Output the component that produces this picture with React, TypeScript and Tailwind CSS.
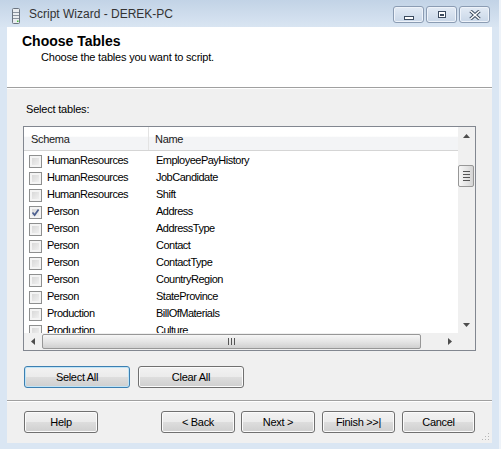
import clsx from 'clsx';

const rows: { schema: string; name: string; checked?: boolean }[] = [
  { schema: 'HumanResources', name: 'EmployeePayHistory' },
  { schema: 'HumanResources', name: 'JobCandidate' },
  { schema: 'HumanResources', name: 'Shift' },
  { schema: 'Person', name: 'Address', checked: true },
  { schema: 'Person', name: 'AddressType' },
  { schema: 'Person', name: 'Contact' },
  { schema: 'Person', name: 'ContactType' },
  { schema: 'Person', name: 'CountryRegion' },
  { schema: 'Person', name: 'StateProvince' },
  { schema: 'Production', name: 'BillOfMaterials' },
  { schema: 'Production', name: 'Culture' },
];

const CheckBox = ({ checked }: { checked?: boolean }) => (
  <div className="relative mt-[4px] h-[13px] w-[13px] shrink-0 border border-[#8e8f8f] bg-[linear-gradient(135deg,#d2d2d2,#f6f6f6)] shadow-[inset_0_0_0_2px_#f4f4f4]">
    {checked && (
      <svg className="absolute left-0 top-0" width="11" height="11" viewBox="0 0 11 11">
        <path d="M2.5 5.5 L4.6 8 L8.6 2.4" fill="none" stroke="#4c5f8f" strokeWidth="1.7" />
      </svg>
    )}
  </div>
);

const Button = ({
  label,
  className,
  focused,
}: {
  label: string;
  className?: string;
  focused?: boolean;
}) => (
  <div
    className={clsx(
      'flex h-[22px] shrink-0 items-center justify-center rounded-[3px] border text-[11px] tracking-[-0.3px] text-black',
      'bg-[linear-gradient(#f2f2f2_0%,#ebebeb_48%,#dddddd_52%,#cfcfcf_100%)]',
      focused
        ? 'border-[#3c7fb1] shadow-[inset_0_0_0_1px_#bfe4f7]'
        : 'border-[#707070] shadow-[inset_0_0_0_1px_#fbfbfb]',
      className
    )}
  >
    {label}
  </div>
);

const TitleButton = ({ kind }: { kind: 'min' | 'max' | 'close' }) => (
  <div className="flex h-[17px] w-[31px] items-center justify-center rounded-[3px] border border-[#8b9cb3] bg-[linear-gradient(#e3ebf5,#c9d7e8)] shadow-[inset_0_0_0_1px_#eef3fa]">
    <svg width="14" height="10" viewBox="0 0 14 10">
      {kind === 'min' && (
        <rect x="2.5" y="6.5" width="9" height="3" fill="#fff" stroke="#3b4a5e" />
      )}
      {kind === 'max' && (
        <>
          <rect x="3.5" y="1.5" width="7" height="6" fill="#fff" stroke="#3b4a5e" />
          <rect x="5" y="4" width="4" height="2" fill="#3b4a5e" />
        </>
      )}
      {kind === 'close' && (
        <>
          <path d="M2.5 1 L11.5 9 M11.5 1 L2.5 9" stroke="#3b4a5e" strokeWidth="3.4" />
          <path d="M2.5 1 L11.5 9 M11.5 1 L2.5 9" stroke="#fff" strokeWidth="1.6" />
        </>
      )}
    </svg>
  </div>
);

const Arrow = ({ dir }: { dir: 'up' | 'down' | 'left' | 'right' }) => {
  const d = {
    up: 'M0 4 L3.5 0 L7 4 Z',
    down: 'M0 0 L7 0 L3.5 4 Z',
    left: 'M4 0 L4 7 L0 3.5 Z',
    right: 'M0 0 L4 3.5 L0 7 Z',
  }[dir];
  const vertical = dir === 'up' || dir === 'down';
  return (
    <svg width={vertical ? 7 : 4} height={vertical ? 4 : 7} viewBox={vertical ? '0 0 7 4' : '0 0 4 7'}>
      <path d={d} fill="#4d4d4d" />
    </svg>
  );
};

const TableList = () => (
  <div className="ml-[16px] mt-[10px] grid h-[225px] w-[453px] grid-cols-[434px_17px] grid-rows-[206px_17px] border border-[#828790] bg-white">
    <div className="flex flex-col overflow-hidden">
      <div className="flex h-[24px] shrink-0 items-center border-b border-[#d5d5d5] bg-[linear-gradient(#ffffff_0%,#ffffff_40%,#f3f4f6_45%,#f3f4f6_100%)] text-[11px] tracking-[-0.3px] text-[#1b1b1b]">
        <div className="flex h-full w-[125px] items-center border-r border-[#e3e3e3] pl-[7px] pt-[1px]">Schema</div>
        <div className="pl-[6px] pt-[1px]">Name</div>
      </div>
      {rows.map((row) => (
        <div
          key={row.schema + row.name}
          className="flex h-[17px] shrink-0 items-start pl-[5px] text-[11px] tracking-[-0.5px] text-black"
        >
          <CheckBox checked={row.checked} />
          <span className="ml-[5px] mt-[1px] w-[109px] leading-[17px]">{row.schema}</span>
          <span className="mt-[1px] leading-[17px]">{row.name}</span>
        </div>
      ))}
    </div>

    <div className="flex flex-col bg-[#f0f0f0]">
      <div className="flex h-[17px] items-center justify-center">
        <Arrow dir="up" />
      </div>
      <div className="mt-[21px] flex h-[22px] w-[16px] flex-col items-center justify-center gap-[2px] rounded-[2px] border border-[#979797] bg-[linear-gradient(90deg,#f6f6f6,#e3e3e3_60%,#d4d4d4)]">
        <div className="h-[1px] w-[7px] bg-[#555]" />
        <div className="h-[1px] w-[7px] bg-[#555]" />
        <div className="h-[1px] w-[7px] bg-[#555]" />
        <div className="h-[1px] w-[7px] bg-[#555]" />
      </div>
      <div className="flex-1" />
      <div className="flex h-[17px] items-center justify-center">
        <Arrow dir="down" />
      </div>
    </div>

    <div className="flex items-center bg-[#f0f0f0]">
      <div className="flex h-[17px] w-[17px] items-center justify-center">
        <Arrow dir="left" />
      </div>
      <div className="ml-[1px] flex h-[15px] w-[379px] items-center justify-center gap-[2px] rounded-[2px] border border-[#979797] bg-[linear-gradient(#f6f6f6,#e3e3e3_55%,#d0d0d0)]">
        <div className="h-[7px] w-[1px] bg-[#555]" />
        <div className="h-[7px] w-[1px] bg-[#555]" />
        <div className="h-[7px] w-[1px] bg-[#555]" />
      </div>
      <div className="flex-1" />
      <div className="flex h-[17px] w-[17px] items-center justify-center">
        <Arrow dir="right" />
      </div>
    </div>
    <div className="bg-[#f0f0f0]" />
  </div>
);

export default function App() {
  return (
    <div className="flex h-[449px] w-[501px] font-['Liberation_Sans',Arial,sans-serif]">
      <div className="flex w-[499px] flex-col bg-[#dae6f3]">
        {/* title bar */}
        <div className="flex h-[27px] shrink-0 items-start bg-[linear-gradient(#c2d3e6,#d9e5f2)]">
          <svg className="ml-[12px] mt-[8px]" width="8" height="16" viewBox="0 0 8 16">
            <rect x="0.5" y="0.5" width="7" height="15" rx="1" fill="#e9ecef" stroke="#6b7480" />
            <path d="M1 4.5 H7 M1 7.5 H7 M1 10.5 H7" stroke="#8a939e" />
            <rect x="5" y="12.5" width="1.5" height="1.5" fill="#46c23c" />
          </svg>
          <span className="ml-[9px] mt-[7px] text-[12px] leading-[15px] text-[#333]">
            Script Wizard - DEREK-PC
          </span>
          <div className="ml-auto mr-[9px] mt-[6px] flex gap-[2px]">
            <TitleButton kind="min" />
            <TitleButton kind="max" />
            <TitleButton kind="close" />
          </div>
        </div>

        <div className="flex flex-1">
          <div className="w-[7px]" />
          <div className="flex w-[485px] flex-col bg-[#f0f0f0]">
            {/* header */}
            <div className="h-[61px] shrink-0 border-b border-[#a0a0a0] bg-white">
              <div className="ml-[15px] mt-[6px] text-[14px] font-bold leading-[16px] text-black">
                Choose Tables
              </div>
              <div className="ml-[34px] mt-[2px] text-[11px] leading-[13px] tracking-[-0.2px] text-black">
                Choose the tables you want to script.
              </div>
            </div>
            <div className="flex flex-1 flex-col border-t border-white">
              <div className="ml-[19px] mt-[13px] h-[14px] text-[11px] leading-[14px] tracking-[-0.2px] text-black">
                Select tables:
              </div>
              <TableList />
              <div className="ml-[17px] mt-[15px] flex">
                <Button label="Select All" className="w-[106px]" focused />
                <Button label="Clear All" className="ml-[8px] w-[106px]" />
              </div>
              <div className="mt-[12px] h-[2px] border-t border-[#a0a0a0] bg-white" />
              <div className="ml-[17px] mt-[9px] flex">
                <Button label="Help" className="w-[74px]" />
                <Button label="< Back" className="ml-[63px] w-[74px]" />
                <Button label="Next >" className="ml-[6px] w-[74px]" />
                <Button label="Finish >>|" className="ml-[7px] w-[73px]" />
                <Button label="Cancel" className="ml-[7px] w-[73px]" />
              </div>
              <div className="flex flex-1 items-end justify-end pb-[2px] pr-[2px]">
                <svg width="8" height="8" viewBox="0 0 8 8">
                  <rect x="6" y="0" width="1" height="1" fill="#b5b5b5" />
                  <rect x="3" y="3" width="1" height="1" fill="#b5b5b5" />
                  <rect x="6" y="3" width="1" height="1" fill="#b5b5b5" />
                  <rect x="0" y="6" width="1" height="1" fill="#b5b5b5" />
                  <rect x="3" y="6" width="1" height="1" fill="#b5b5b5" />
                  <rect x="6" y="6" width="1" height="1" fill="#b5b5b5" />
                </svg>
              </div>
            </div>
          </div>
          <div className="w-[7px]" />
        </div>
        <div className="h-[7px] shrink-0" />
      </div>
      <div className="w-[2px] bg-[#eef3f9]" />
    </div>
  );
}
